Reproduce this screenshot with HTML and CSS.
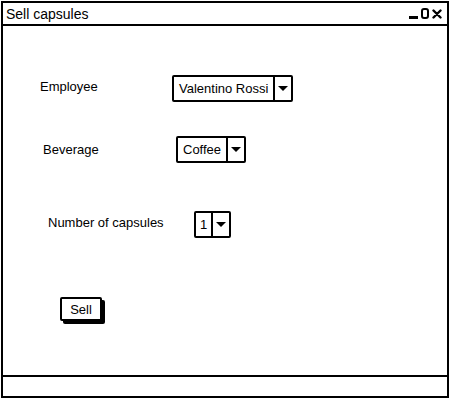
FILE: index.html
```html
<!DOCTYPE html>
<html lang="en">

<head>
    <meta charset="UTF-8">
    <title>Sell capsules</title>
    <link rel="stylesheet" href="styles.css">
</head>

<body>
    <div class="window">
        <div class="titlebar">
            <span class="title">Sell capsules</span>
            <div class="controls">
                <span class="ctl-min"></span>
                <span class="ctl-max"></span>
                <svg class="ctl-close" width="10" height="10" viewBox="0 0 10 10">
                    <path d="M1.5 1.5 L8.5 8.5 M8.5 1.5 L1.5 8.5" stroke="#000" stroke-width="2.4" stroke-linecap="round" />
                </svg>
            </div>
        </div>

        <div class="content">
            <div class="row row-employee">
                <label class="label">Employee</label>
                <div class="select">
                    <span class="select-text">Valentino Rossi</span>
                    <span class="select-arrow"><i></i></span>
                </div>
            </div>

            <div class="row row-beverage">
                <label class="label">Beverage</label>
                <div class="select">
                    <span class="select-text">Coffee</span>
                    <span class="select-arrow"><i></i></span>
                </div>
            </div>

            <div class="row row-number">
                <label class="label">Number of capsules</label>
                <div class="select">
                    <span class="select-text narrow">1</span>
                    <span class="select-arrow"><i></i></span>
                </div>
            </div>

            <div class="row row-button">
                <button class="button">Sell</button>
            </div>
        </div>

        <div class="statusbar"></div>
    </div>
</body>

</html>
```

FILE: styles.css
```css
* {
    box-sizing: border-box;
}

body {
    margin: 0;
    font-family: 'Liberation Sans', Arial, sans-serif;
    font-size: 13px;
    color: #000;
    background-color: #fff;
}

.window {
    width: 448px;
    height: 397px;
    margin: 1px 0 0 1px;
    border: 2px solid #000;
    display: flex;
    flex-direction: column;
}

.titlebar {
    height: 23px;
    border-bottom: 2px solid #000;
    display: flex;
    align-items: center;
    justify-content: space-between;
    padding: 0 5px 0 3px;
}

.title {
    font-size: 14px;
}

.controls {
    display: flex;
    align-items: center;
    gap: 3px;
}

.ctl-min {
    width: 9px;
    height: 3px;
    margin-top: 7px;
    background-color: #000;
}

.ctl-max {
    width: 8px;
    height: 11px;
    border: 2px solid #000;
    border-radius: 3px;
}

.content {
    flex: 1;
}

.row {
    display: flex;
    align-items: center;
}

.row-employee {
    margin-top: 49px;
    padding-left: 37px;
}

.row-employee .label {
    width: 132px;
    margin-top: -5px;
}

.row-beverage {
    margin-top: 34px;
    padding-left: 40px;
}

.row-beverage .label {
    width: 133px;
}

.row-number {
    margin-top: 48px;
    padding-left: 45px;
}

.row-number .label {
    width: 146px;
    margin-top: -5px;
}

.row-button {
    margin-top: 59px;
    padding-left: 57px;
}

.select {
    display: flex;
    height: 27px;
    border: 2px solid #000;
    border-radius: 2px;
}

.select-text {
    padding: 0 5px;
    display: flex;
    align-items: center;
    border-right: 2px solid #000;
}

.select-text.narrow {
    padding: 0 4px;
}

.select-arrow {
    width: 16px;
    display: flex;
    align-items: center;
    justify-content: center;
}

.select-arrow i {
    width: 0;
    height: 0;
    border-left: 5px solid transparent;
    border-right: 5px solid transparent;
    border-top: 5px solid #000;
}

.button {
    font-family: inherit;
    font-size: 13px;
    width: 42px;
    height: 24px;
    padding: 0;
    background-color: #fff;
    border: 2px solid #000;
    border-radius: 2px;
    box-shadow: 3px 3px 0 #000;
}

.statusbar {
    height: 21px;
    border-top: 2px solid #000;
}
```
